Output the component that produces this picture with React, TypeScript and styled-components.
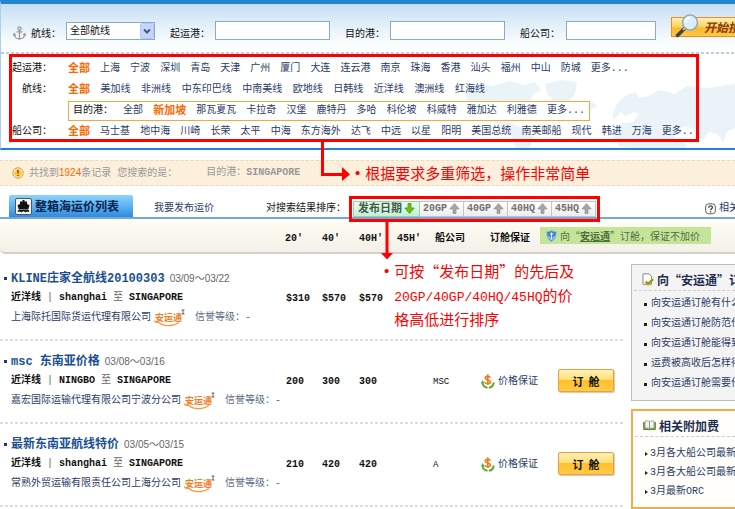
import React from 'react';
import styled, { createGlobalStyle, css } from 'styled-components';

const cjk = '"Noto Sans CJK SC", sans-serif';
const mono = `"Liberation Mono", ${cjk}`;
const sans = `"Liberation Sans", ${cjk}`;
const navy = '#2c3b66';
const red = '#fe0000';

const Global = createGlobalStyle`
  *, *::before, *::after { box-sizing: border-box; }
  body { margin: 0; background: #fff; overflow: hidden; font: 10px/14px ${mono}; color: ${navy}; }
  a { color: inherit; text-decoration: none; }
  svg { flex: none; }
  button, input, select { font: inherit; color: inherit; margin: 0; padding: 0; border-radius: 0; }
  ul, h2, h3 { margin: 0; padding: 0; list-style: none; font: inherit; }
`;

const Page = styled.div`
  min-height: 100vh;
  white-space: nowrap;
  overflow: hidden;
`;

const dashes = (color: string) => css`
  background-image: linear-gradient(90deg, ${color} 60%, transparent 0);
  background-size: 5px 2px;
  background-repeat: repeat-x;
`;

/* ---------- search panel ---------- */

const SearchPanel = styled.section`
  position: relative;
  border-top: 4px solid #2283cf;
  border-bottom: 2px solid #2283cf;
  border-left: 1px solid #a9d0f2;
  padding-bottom: 6px;
  background: linear-gradient(#c6def3 0, #e4f0fa 22px, #fbfefe 40px, #fff 60px);
`;

const WorldMap = styled.svg`
  position: absolute;
  right: 0;
  bottom: 0;
  width: 274px;
  height: 70px;
`;

const SearchForm = styled.form`
  display: flex;
  align-items: center;
  gap: 15px;
  height: 48px;
  padding: 5px 0 0 12px;
  color: #111;
  overflow: hidden;
`;

const Field = styled.div`
  display: flex;
  align-items: center;
  flex: none;
  gap: 5px;
  > svg { margin-top: 4px; }
`;

const FieldLabel = styled.label<{ $w: number }>`
  width: ${(p) => p.$w}px;
  padding-top: 8px;
`;

const TextBox = styled.input<{ $w: number }>`
  width: ${(p) => p.$w}px;
  height: 19px;
  border: 1px solid #8aa9cf;
  background: #fff;
`;

const SelectWrap = styled.div`
  position: relative;
  width: 89px;
  height: 18px;
  select {
    appearance: none;
    width: 100%;
    height: 100%;
    padding: 2px 0 0 3px;
    border: 1px solid #8aa9cf;
    background: #fff;
  }
  svg {
    position: absolute;
    right: 1px;
    top: 1px;
    pointer-events: none;
  }
`;

const SearchButton = styled.button`
  position: relative;
  flex: none;
  height: 20px;
  margin-bottom: 8px;
  padding-left: 32px;
  border: 1px solid #f08a24;
  border-right: 0;
  background: linear-gradient(#fdf0b8, #fdd25a 50%, #fbb829 55%, #fdc84a);
  font: italic bold 12px/17px ${cjk};
  color: #8a3a10;
  svg {
    position: absolute;
    left: 3px;
    top: -4px;
  }
`;

const DashLine = styled.div`
  height: 2px;
  ${dashes('#c3cbe0')}
`;

const FilterBox = styled.div`
  position: relative;
  display: grid;
  row-gap: 7px;
  width: fit-content;
  max-width: calc(100% - 8px);
  margin-left: 8px;
  border: 3px solid ${red};
  padding-top: 5px;
`;

const FilterRow = styled.div`
  display: grid;
  grid-template-columns: 40px auto;
  column-gap: 16px;
  align-items: center;
  height: 14px;
  padding-right: 2px;
`;

const FilterName = styled.span`
  text-align: right;
  color: #111;
`;

const FilterItems = styled.div<{ $w: number }>`
  display: flex;
  justify-content: space-between;
  width: ${(p) => p.$w}px;
`;

const Destination = styled(FilterItems)`
  height: 20px;
  margin: -3px 0;
  align-items: center;
  border: 1px solid #f5a93a;
  background: #fff;
  padding: 0 4px;
`;

const FilterLink = styled.a<{ $on?: boolean }>`
  ${(p) => p.$on && css`
    color: #ff6600;
    font: bold 11px/14px ${mono};
  `}
`;

/* ---------- notice ---------- */

const Notice = styled.div`
  display: flex;
  align-items: center;
  gap: 5px;
  height: 26px;
  margin-top: 10px;
  padding-left: 12px;
  background: #fcefdc;
  border-top: 1px dashed #efd9b4;
  border-bottom: 1px dashed #efd9b4;
  color: #999;
  em { font: 10px/14px ${sans}; color: #f60; }
`;

const Criteria = styled.span`
  margin-left: 24px;
`;

/* ---------- tabs ---------- */

const TabBar = styled.nav`
  display: flex;
  align-items: center;
  height: 24px;
  margin-top: 9px;
  padding-left: 9px;
  border-bottom: 2px solid #72a9d8;
`;

const ActiveTab = styled.h2`
  display: flex;
  align-items: center;
  gap: 3px;
  width: 124px;
  height: 22px;
  padding-left: 6px;
  border-radius: 2px 2px 0 0;
  background: linear-gradient(#8dd4fb, #5cb4f3 50%, #3089dc);
  font: bold 12px/20px ${cjk};
  color: #08224e;
`;

const TabLink = styled.a`
  margin: 6px 0 0 21px;
`;

const SortLabel = styled.span`
  margin: 6px 3px 0 52px;
  color: #111;
`;

const SortBox = styled.div`
  position: relative;
  display: flex;
  flex: none;
  height: 26px;
  margin-top: 5px;
  border: 3px solid ${red};
  padding: 2px 1px;
`;

const SortButton = styled.button<{ $on?: boolean }>`
  display: flex;
  align-items: center;
  justify-content: center;
  gap: 2px;
  width: ${(p) => (p.$on ? 67 : 44)}px;
  border: 1px solid ${(p) => (p.$on ? '#8fd6a8' : '#c4c4c4')};
  border-left-width: ${(p) => (p.$on ? 1 : 0)}px;
  background: ${(p) => (p.$on ? 'linear-gradient(#eefaf0, #c8eed4)' : 'linear-gradient(#fff, #ededed)')};
  font: bold ${(p) => (p.$on ? 11 : 10)}px/12px ${mono};
  color: ${(p) => (p.$on ? '#3a5f4c' : '#707070')};
`;

const HelpLink = styled.a`
  display: flex;
  align-items: center;
  gap: 3px;
  width: 30px;
  margin: 6px 0 0 auto;
`;

const columns = '37px 37px 38px 38px 55px 50px';

const HeadBar = styled.div`
  display: grid;
  grid-template-columns: calc(100% - 450px) ${columns} 1fr;
  align-items: center;
  height: 35px;
  border-bottom: 2px solid #d4d1cb;
  border-bottom-left-radius: 5px;
  background: linear-gradient(#fffdf5 0, #fbf8f0 35%, #f3f0e9);
  font-weight: bold;
  color: #111;
  > span { padding-top: 6px; }
`;

const Assurance = styled.div`
  display: flex;
  align-items: center;
  gap: 3px;
  width: 171px;
  height: 17px;
  padding-left: 6px;
  background: #c4e49a;
  font: 10px/14px ${cjk};
  color: #4d7040;
  a { font-weight: bold; text-decoration: underline; }
`;

/* ---------- body ---------- */

const Body = styled.div`
  display: grid;
  grid-template-columns: minmax(0, 1fr) 104px;
  column-gap: 7px;
  align-items: start;
`;

const Offers = styled.ul`
  padding-top: 4px;
`;

const Offer = styled.li`
  display: grid;
  grid-template-columns: minmax(0, 1fr) 36px 37px 37px 37px 48px 77px 66px;
  align-items: center;
  height: 83px;
  padding-bottom: 2px;
  ${dashes('#dedede')}
  background-position: 0 100%;
  color: #111;
`;

const Summary = styled.div`
  position: relative;
  display: grid;
  row-gap: 4px;
  padding-left: 11px;
  &::before {
    content: '';
    position: absolute;
    left: 4px;
    top: 6px;
    width: 3px;
    height: 3px;
    background: #1d3c6e;
  }
`;

const Line = styled.div`
  display: flex;
  align-items: center;
  height: 16px;
`;

const CompanyLine = styled(Line)`
  height: 18px;
`;

const OfferTitle = styled.a`
  font: bold 12px/16px ${mono};
  color: #1b4f92;
`;

const OfferDate = styled.span`
  margin-left: 5px;
  font: 10px/16px ${sans};
  color: #666;
`;

const Route = styled.div`
  font-weight: bold;
  span { font-weight: normal; color: #666; }
`;

const Company = styled.a`
  color: ${navy};
`;

const Credit = styled.span`
  margin-left: 10px;
  color: #5c6b85;
`;

const Price = styled.span`
  font-weight: bold;
`;

const Carrier = styled.span`
  font-size: 9px;
`;

const Guarantee = styled.span`
  display: flex;
  align-items: center;
  gap: 3px;
  color: ${navy};
`;

const BookButton = styled.button`
  width: 56px;
  height: 23px;
  margin-bottom: 2px;
  border: 1px solid #e3a04a;
  border-radius: 2px;
  background: linear-gradient(#fff0b5, #ffdf7a 45%, #ffc02c 50%, #ffcb45);
  box-shadow: 1px 1px 1px #d8c9ae;
  font: bold 11px/18px ${cjk};
  color: #111;
`;

const Side = styled.aside`
  display: grid;
  row-gap: 8px;
  padding-top: 10px;
`;

const SideBox = styled.section`
  border: 1px solid #bdbdbd;
  border-right: 0;
  background: #f4f4f4;
  overflow: hidden;
  padding-bottom: 6px;
  h3 {
    display: flex;
    align-items: center;
    gap: 3px;
    height: 26px;
    padding: 4px 0 0 8px;
    border-bottom: 1px dashed #ccc;
    margin-left: 2px;
    font: bold 12px/16px ${cjk};
    color: #1f2f52;
  }
  ul { padding-top: 3px; }
`;

const WarmBox = styled(SideBox)`
  border: 2px solid #f0ad48;
  border-right: 0;
  background: #fffefa;
  ul { padding-top: 7px; }
`;

const SideItem = styled.li<{ $arrow?: boolean }>`
  display: flex;
  align-items: center;
  height: ${(p) => (p.$arrow ? 19 : 20)}px;
  padding-left: 12px;
  &::before {
    content: '';
    flex: none;
    ${(p) => p.$arrow ? css`
      width: 0;
      height: 0;
      border: 2px solid transparent;
      border-left: 3px solid #222;
      border-right: 0;
      margin-right: 2px;
    ` : css`
      width: 3px;
      height: 3px;
      background: #222;
      margin-right: 4px;
    `}
  }
`;

/* ---------- callouts ---------- */

const Callout = styled.div<{ $x: number; $y: number }>`
  position: absolute;
  left: ${(p) => p.$x}px;
  top: ${(p) => p.$y}px;
  display: flex;
  gap: 5px;
  z-index: 2;
  font: 15px/24px ${cjk};
  color: ${red};
  pointer-events: none;
`;

const Bullet = styled.span`
  font: 15px/24px ${sans};
`;

const CalloutText = styled.p`
  margin: 0;
  span { font: 13px/14px ${mono}; }
`;

/* ---------- icons ---------- */

const Anchor = () => (
  <svg width="13" height="14" viewBox="0 0 13 14" fill="none" stroke="#9a9a9a" strokeWidth="1.3">
    <circle cx="6.5" cy="2.4" r="1.6" />
    <path d="M6.5 4v9M3.5 5.8h6M1 8c.4 3 2.600 4.800 5.500 5 2.900-.2 5.100-2 5.500-5M0 9.500l1.200-1.800 1.600 1.500M13 9.500l-1.200-1.800-1.600 1.500" />
  </svg>
);

const Magnifier = () => (
  <svg width="24" height="24" viewBox="0 0 24 24">
    <path d="M9 15L2.500 21.500" stroke="#444" strokeWidth="3.500" strokeLinecap="round" />
    <path d="M10.500 13.500L8 16" stroke="#bbb" strokeWidth="2" />
    <circle cx="15" cy="8.500" r="7.500" fill="#dbeeff" stroke="#9aa7b5" strokeWidth="1.600" />
    <path d="M10.500 8c.5-2.500 2-4 4.500-4.300" stroke="#fff" strokeWidth="2" fill="none" />
  </svg>
);

const Alert = () => (
  <svg width="12" height="12" viewBox="0 0 12 12">
    <circle cx="6" cy="6" r="5.200" fill="#fff3c0" stroke="#d99a4a" />
    <circle cx="6" cy="6" r="3.600" fill="#f9c833" />
    <path d="M6 2.800v3.700M6 8v1.300" stroke="#9a4b10" strokeWidth="1.500" />
  </svg>
);

const Ship = () => (
  <svg width="17" height="17" viewBox="0 0 17 17">
    <rect x=".5" y=".5" width="16" height="16" rx="1.500" fill="#f4f4f4" stroke="#555" />
    <path d="M7.500 2h2v1.500H12V6l2.500 1.200-1.300 4.300H3.800L2.500 7.200 5 6V3.500h2.500z" fill="#111" />
    <path d="M3 13.500c1.200-1.200 2.400-1.200 3.600 0 1.200-1.200 2.600-1.200 3.800 0 1.200-1.200 2.400-1.200 3.600 0" stroke="#111" strokeWidth="1.500" fill="none" />
  </svg>
);

const SortArrow = ({ down }: { down?: boolean }) => (
  <svg width="11" height="11" viewBox="0 0 11 11">
    {down
      ? <path d="M4 .5h3v4.500h3.200L5.500 10.500.8 5H4z" fill="#6cc21c" stroke="#3f9a18" strokeWidth=".8" />
      : <path d="M4 10.500h3V6h3.200L5.500.5.8 6H4z" fill="#a6a6a6" stroke="#8c8c8c" strokeWidth=".6" />}
  </svg>
);

const Help = () => (
  <svg width="11" height="12" viewBox="0 0 11 12">
    <rect x=".6" y=".8" width="9.800" height="10" rx="3" fill="#fffde0" stroke="#4a6488" />
    <path d="M3.700 4.700c0-2.400 3.700-2.400 3.700-.2 0 1.300-1.800 1.400-1.800 2.700M5.600 8.200v1.300" stroke="#2b3f66" strokeWidth="1.300" fill="none" />
  </svg>
);

const Shield = () => (
  <svg width="11" height="12" viewBox="0 0 11 12">
    <path d="M.7 1.500C3 1.500 4 1 5.500.5 7 1 8 1.500 10.300 1.500c.2 5-1 8-4.800 10C1.700 9.500.5 6.500.7 1.500z" fill="#3d86c8" stroke="#a9c3dc" />
    <path d="M5.500 2.500v6.500M3.800 4h3.400M2.800 6.300C3 8 4 9 5.500 9.200 7 9 8 8 8.200 6.300" stroke="#fff" strokeWidth=".9" fill="none" />
  </svg>
);

const Brand = styled.svg`
  margin-left: 3px;
`;

const BrandMark = () => (
  <Brand width="31" height="18" viewBox="0 0 31 18">
    <text x="1" y="12" fill="#f47b1c" fontFamily={cjk} fontWeight="bold" fontSize="9">安运通</text>
    <path d="M1 11.500c-1 2 2 2 4 2 3 2.800 7 3.500 12 3 4-.4 6-1.600 8-3" fill="none" stroke="#f79a45" strokeWidth="1.300" />
    <path d="M27.500 1h3M29 1v4M27.500 5h3" stroke="#555" strokeWidth=".9" />
  </Brand>
);

const Coin = () => (
  <svg width="14" height="15" viewBox="0 0 14 15">
    <path d="M1.500 8.500c.3 3 2 4.800 5 5.200M12.800 8.500c-.4 3-2.300 4.900-5 5.200" stroke="#57ad2c" strokeWidth="2" fill="none" />
    <path d="M.2 9.500L1.200 6l2.400 3z" fill="#57ad2c" />
    <path d="M9.300 3.600C8.500 2 4.200 1.800 4.200 4.100c0 2.400 5.300 1.300 5.300 3.900 0 2.200-4.800 2.200-5.800.3M6.800.3v10.700" stroke="#f1791e" strokeWidth="1.600" fill="none" />
  </svg>
);

const Note = () => (
  <svg width="12" height="13" viewBox="0 0 12 13">
    <path d="M1 .8h6l2.500 2.500v8H1z" fill="#fff" stroke="#888" />
    <path d="M3.500 8.500l2.500 2.700L11 6" stroke="#d9a520" strokeWidth="2.600" fill="none" />
    <path d="M4.500 9l1.600 1.700L11 6.500" stroke="#5aa02c" strokeWidth="1.200" fill="none" />
  </svg>
);

const Book = () => (
  <svg width="13" height="11" viewBox="0 0 13 11">
    <path d="M.7 2v7.500h5l.8.800.8-.8h5V2" fill="#7fb648" stroke="#4d8a28" />
    <path d="M2 1.200C4 .5 5.500.8 6.500 1.800v7C5.500 8 4 7.800 2 8.300zM11 1.200C9 .5 7.500.8 6.500 1.800v7C7.500 8 9 7.800 11 8.300z" fill="#f2f2f2" stroke="#8d8d8d" strokeWidth=".8" />
  </svg>
);

/* ---------- data ---------- */

const ports = '上海 宁波 深圳 青岛 天津 广州 厦门 大连 连云港 南京 珠海 香港 汕头 福州 中山 防城 更多...'.split(' ');
const routes = '美加线 非洲线 中东印巴线 中南美线 欧地线 日韩线 近洋线 澳洲线 红海线'.split(' ');
const targets = '那瓦夏瓦 卡拉奇 汉堡 鹿特丹 多哈 科伦坡 科威特 雅加达 利雅德 更多...'.split(' ');
const carriers = '马士基 地中海 川崎 长荣 太平 中海 东方海外 达飞 中远 以星 阳明 美国总统 南美邮船 现代 韩进 万海 更多..'.split(' ');

const offers = [
  { title: 'KLINE庄家全航线20100303', date: '03/09～03/22', from: 'shanghai', company: '上海际托国际货运代理有限公司', prices: ['$310', '$570', '$570'], carrier: '' },
  { title: 'msc 东南亚价格', date: '03/08～03/16', from: 'NINGBO', company: '嘉宏国际运输代理有限公司宁波分公司', prices: ['200', '300', '300'], carrier: 'MSC' },
  { title: '最新东南亚航线特价', date: '03/05～03/15', from: 'shanghai', company: '常熟外贸运输有限责任公司上海分公司', prices: ['210', '420', '420'], carrier: 'A' },
];

const guides = ['向安运通订舱有什么', '向安运通订舱防范什', '向安运通订舱能得到', '运费被高收后怎样得', '向安运通订舱需要什'];
const surcharges = ['3月各大船公司最新', '3月各大船公司最新', '3月最新ORC'];

const Links = ({ items }: { items: string[] }) => (
  <>{items.map((t) => <FilterLink href="#" key={t}>{t}</FilterLink>)}</>
);

export default function App() {
  return (
    <Page lang="zh-CN">
      <Global />
      <SearchPanel>
        <WorldMap viewBox="0 0 274 70" fill="#e9f3f8">
          <path d="M4 14l10-8 18 2 16-5 16 4 10-3 6 8-8 4-4 10-10 4-4 8-8-2 2 8 8 4 8 2 8 8-2 10-8 10H58l-6-16-4-8-10-6-10-10-2-10-8-4-10 2z" />
          <path d="M84 6l16-4 16 2-2 12-8 8-6 8-6-8-8-8zM124 26l8-2 4 4-6 4-6-2z" />
          <path d="M152 36l4-10 8-8 10-4 4 6 10-2 10-6 16 4 12-8 20 2 28-4v44l-8 4-4 10-6-8-8-2-6 8-6-10-12-4-8 4-4 10h8l6 6-6 14h-42l-10-12-10-2-6-12 6-10 14-2 6-8-6-2-8 4-4-4-8 8z" />
        </WorldMap>
        <SearchForm>
          <Field>
            <Anchor />
            <FieldLabel $w={30} htmlFor="route">航线：</FieldLabel>
            <SelectWrap>
              <select id="route"><option>全部航线</option></select>
              <svg width="14" height="16" viewBox="0 0 14 16">
                <rect x=".5" y=".5" width="13" height="15" rx="1" fill="#c6d6fb" stroke="#b0c6f4" />
                <path d="M4 6.500l3 3 3-3" stroke="#44597c" strokeWidth="2" fill="none" />
              </svg>
            </SelectWrap>
          </Field>
          <Field><FieldLabel $w={40} htmlFor="from">起运港：</FieldLabel><TextBox id="from" $w={115} /></Field>
          <Field><FieldLabel $w={40} htmlFor="to">目的港：</FieldLabel><TextBox id="to" $w={115} /></Field>
          <Field><FieldLabel $w={41} htmlFor="line">船公司：</FieldLabel><TextBox id="line" $w={90} /></Field>
          <SearchButton type="button"><Magnifier />开始搜</SearchButton>
        </SearchForm>
        <DashLine />
        <FilterBox>
          <FilterRow>
            <FilterName>起运港：</FilterName>
            <FilterItems $w={561}><FilterLink href="#" $on>全部</FilterLink><Links items={ports} /></FilterItems>
          </FilterRow>
          <FilterRow>
            <FilterName>航线：</FilterName>
            <FilterItems $w={417}><FilterLink href="#" $on>全部</FilterLink><Links items={routes} /></FilterItems>
          </FilterRow>
          <FilterRow>
            <span />
            <Destination $w={522}>
              <FilterName>目的港：</FilterName>
              <FilterLink href="#">全部</FilterLink>
              <FilterLink href="#" $on>新加坡</FilterLink>
              <Links items={targets} />
            </Destination>
          </FilterRow>
          <FilterRow>
            <FilterName>船公司：</FilterName>
            <FilterItems $w={626}><FilterLink href="#" $on>全部</FilterLink><Links items={carriers} /></FilterItems>
          </FilterRow>
          <Callout $x={309} $y={82}>
            <svg width="30" height="42" viewBox="0 0 30 42" fill={red}>
              <path d="M0 0h3v34h18v-6l8 7.500-8 6.500v-5H0z" />
            </svg>
            <Callout $x={34} $y={22}><Bullet>•</Bullet><CalloutText>根据要求多重筛选，操作非常简单</CalloutText></Callout>
          </Callout>
        </FilterBox>
      </SearchPanel>

      <Notice>
        <Alert />
        <span>共找到<em>1924</em>条记录 您搜索的是：</span>
        <Criteria>目的港：<b>SINGAPORE</b></Criteria>
      </Notice>

      <TabBar>
        <ActiveTab><Ship />整箱海运价列表</ActiveTab>
        <TabLink href="#">我要发布运价</TabLink>
        <SortLabel>对搜索结果排序：</SortLabel>
        <SortBox>
          <SortButton $on>发布日期<SortArrow down /></SortButton>
          {['20GP', '40GP', '40HQ', '45HQ'].map((s) => (
            <SortButton key={s}>{s}<SortArrow /></SortButton>
          ))}
          <Callout $x={29} $y={23}>
            <svg width="12" height="38" viewBox="0 0 12 38" fill={red}>
              <path d="M4.500 0h3v31H12l-6 6.500L0 31h4.500z" />
            </svg>
            <Callout $x={3} $y={37}>
              <Bullet>•</Bullet>
              <CalloutText>
                可按“发布日期”的先后及<br />
                <span>20GP/40GP/40HQ/45HQ</span>的价<br />
                格高低进行排序
              </CalloutText>
            </Callout>
          </Callout>
        </SortBox>
        <HelpLink href="#"><Help />相关</HelpLink>
      </TabBar>

      <HeadBar>
        <span />
        <span>20′</span><span>40′</span><span>40H′</span><span>45H′</span>
        <span>船公司</span><span>订舱保证</span>
        <Assurance><Shield /><div>向“<a href="#">安运通</a>”订舱，保证不加价</div></Assurance>
      </HeadBar>

      <Body>
        <Offers>
          {offers.map((o) => (
            <Offer key={o.title}>
              <Summary>
                <Line><OfferTitle href="#">{o.title}</OfferTitle><OfferDate>{o.date}</OfferDate></Line>
                <Route>近洋线<span> | </span>{o.from}<span> 至 </span>SINGAPORE</Route>
                <CompanyLine><Company href="#">{o.company}</Company><BrandMark /><Credit>信誉等级：-</Credit></CompanyLine>
              </Summary>
              {o.prices.map((p, i) => <Price key={i}>{p}</Price>)}
              <span />
              <Carrier>{o.carrier}</Carrier>
              {o.carrier && <Guarantee><Coin />价格保证</Guarantee>}
              {o.carrier && <BookButton>订&nbsp;&nbsp;舱</BookButton>}
            </Offer>
          ))}
        </Offers>
        <Side>
          <SideBox>
            <h3><Note />向“安运通”订</h3>
            <ul>{guides.map((g) => <SideItem key={g}><a href="#">{g}</a></SideItem>)}</ul>
          </SideBox>
          <WarmBox>
            <h3><Book />相关附加费</h3>
            <ul>{surcharges.map((g, i) => <SideItem $arrow key={i}><a href="#">{g}</a></SideItem>)}</ul>
          </WarmBox>
        </Side>
      </Body>
    </Page>
  );
}
